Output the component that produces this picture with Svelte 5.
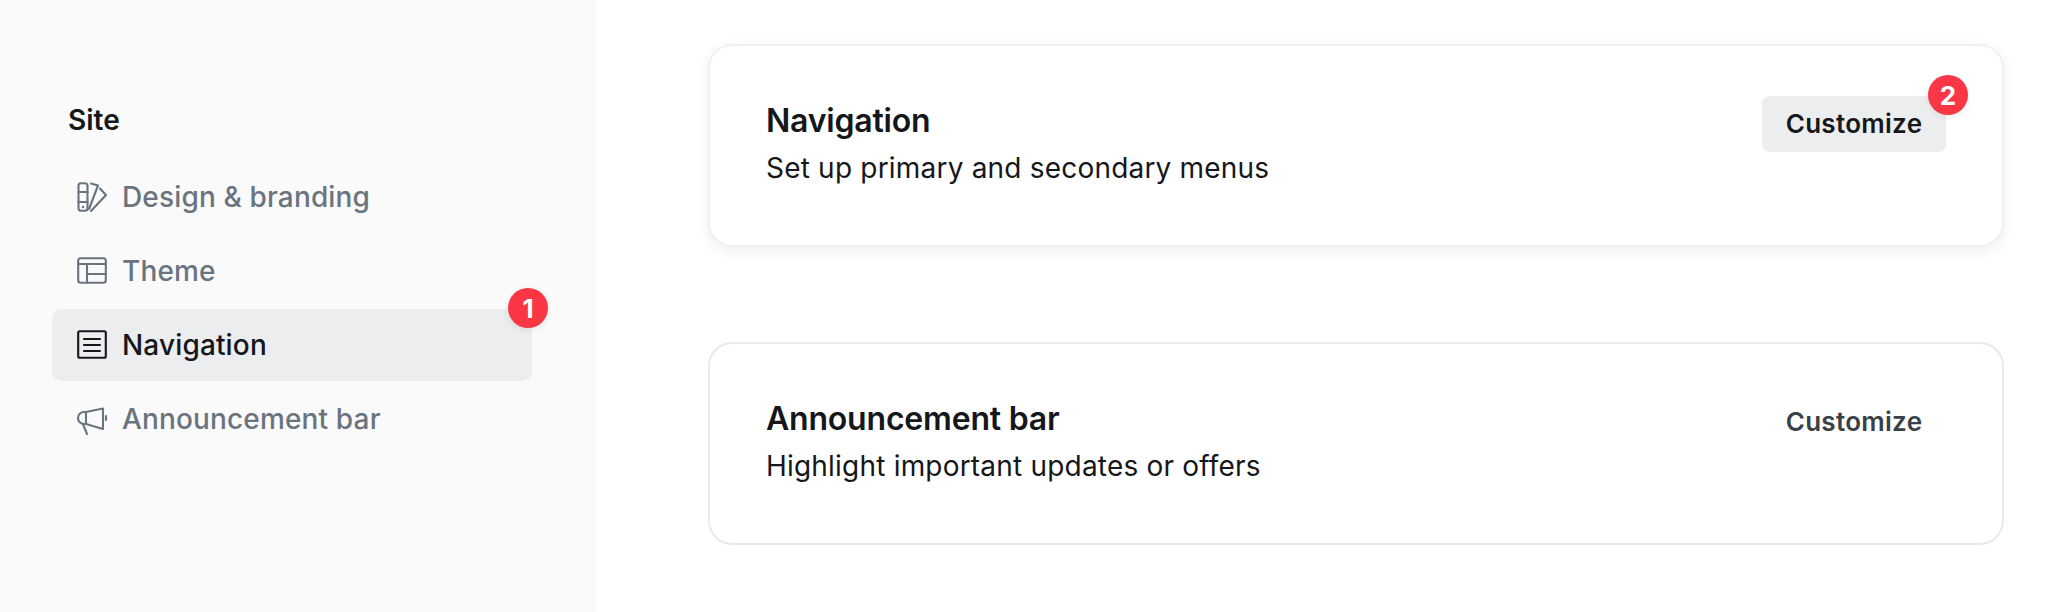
<script>
  const cards = [
    { title: "Navigation", desc: "Set up primary and secondary menus", active: true },
    { title: "Announcement bar", desc: "Highlight important updates or offers", active: false }
  ];
</script>

<div class="page">
  <aside class="sidebar">
    <h2>Site</h2>
    <nav>
      <a href="#design" class="item">
        <svg viewBox="0 0 32 32" class="icon">
          <rect x="2.500" y="2.200" width="9" height="27.600" rx="2.500" />
          <path d="M2.500 11h9M2.500 21h9" />
          <circle cx="7" cy="26" r="1.200" class="dot" />
          <path d="M15 2.500l7 2-9 23.500M24 7.500l6 6.500-15 16" />
        </svg>
        Design &amp; branding
      </a>
      <a href="#theme" class="item">
        <svg viewBox="0 0 32 32" class="icon">
          <rect x="2.200" y="3.200" width="27.600" height="24.600" rx="2.500" />
          <path d="M2.200 9h27.600M11 9v18.800M11 19h18.800" />
        </svg>
        Theme
      </a>
      <a href="#navigation" class="item active">
        <svg viewBox="0 0 32 32" class="icon">
          <rect x="2.200" y="2.200" width="27.600" height="26.600" rx="1.500" />
          <path d="M8 10h16M8 16h16M8 22h16" />
        </svg>
        Navigation
        <span class="badge">1</span>
      </a>
      <a href="#announcement" class="item">
        <svg viewBox="0 0 32 32" class="icon">
          <path d="M27 5.500V26L10 21H8a6 6 0 0 1 0-12h2z" />
          <path d="M10 9v12M7 21l4 10M30 13v4" />
        </svg>
        Announcement bar
      </a>
    </nav>
  </aside>

  <main class="content">
    {#each cards as card}
      <section class="card" class:raised={card.active}>
        <div>
          <h3>{card.title}</h3>
          <p>{card.desc}</p>
        </div>
        <button class:active={card.active}>
          Customize
          {#if card.active}<span class="badge">2</span>{/if}
        </button>
      </section>
    {/each}
  </main>
</div>

<style>
  :global(body) {
    background: #fff;
    font-family: Inter, "Noto Sans", sans-serif;
    color: #15171a;
  }
  .page {
    display: grid;
    grid-template-columns: 596px 1fr;
    height: 612px;
    overflow: hidden;
  }
  .sidebar {
    background: #fafafa;
    padding: 104px 64px 0 52px;
    box-sizing: border-box;
  }
  h2 {
    margin: 0 0 25px 16px;
    font-size: 28px;
    line-height: 32px;
    font-weight: 600;
  }
  nav {
    display: flex;
    flex-direction: column;
    gap: 2px;
  }
  .item {
    position: relative;
    display: flex;
    align-items: center;
    gap: 14px;
    height: 72px;
    padding-left: 24px;
    border-radius: 10px;
    color: #6a747f;
    font-size: 28px;
    font-weight: 500;
    letter-spacing: 0.15px;
    text-decoration: none;
  }
  .item.active {
    background: #ebedef;
    color: #15171a;
  }
  .icon {
    width: 32px;
    height: 32px;
    fill: none;
    stroke: currentColor;
    stroke-width: 2.100;
    stroke-linecap: round;
    stroke-linejoin: round;
    flex: none;
  }
  .dot {
    fill: currentColor;
    stroke: none;
  }
  .badge {
    position: absolute;
    display: flex;
    align-items: center;
    justify-content: center;
    width: 40px;
    height: 40px;
    border-radius: 50%;
    background: #fb3746;
    color: #fff;
    font-size: 26px;
    font-weight: 700;
    letter-spacing: 0;
    box-shadow: 0 2px 6px rgba(0, 0, 0, 0.08);
  }
  .item .badge {
    top: -21px;
    right: -16px;
  }
  .content {
    display: flex;
    flex-direction: column;
    gap: 95px;
    padding: 44px 60px 0 112px;
  }
  .card {
    display: flex;
    justify-content: space-between;
    align-items: flex-start;
    height: 203px;
    box-sizing: border-box;
    padding: 55px 56px 0 56px;
    border: 2px solid #e8eaec;
    border-radius: 24px;
    background: #fff;
  }
  .card.raised {
    border-color: #eff0f1;
    box-shadow: 0 4px 14px rgba(21, 23, 26, 0.07);
  }
  h3 {
    margin: 0;
    font-size: 32px;
    line-height: 40px;
    font-weight: 600;
    letter-spacing: -0.2px;
  }
  p {
    margin: 9px 0 0;
    font-size: 28px;
    line-height: 36px;
    letter-spacing: 0.2px;
  }
  button {
    position: relative;
    height: 56px;
    width: 184px;
    margin-top: -5px;
    padding: 0 0 2px;
    border: 0;
    border-radius: 8px;
    background: transparent;
    color: #394047;
    font: 600 26px Inter, sans-serif;
    letter-spacing: 0.3px;
  }
  button.active {
    background: #ebedef;
    color: #15171a;
  }
  button .badge {
    top: -21px;
    right: -22px;
  }
</style>
